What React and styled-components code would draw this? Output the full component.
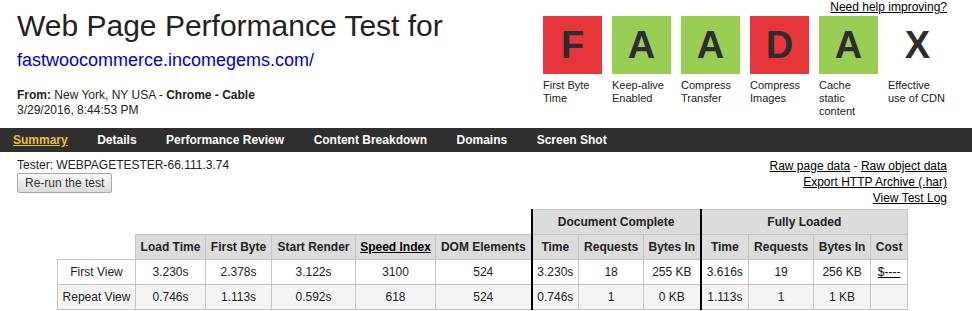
import styled, { createGlobalStyle } from "styled-components";

const GRADES = [
  { letter: "F", label: "First Byte Time", tone: "bad" },
  { letter: "A", label: "Keep-alive Enabled", tone: "good" },
  { letter: "A", label: "Compress Transfer", tone: "good" },
  { letter: "D", label: "Compress Images", tone: "bad" },
  { letter: "A", label: "Cache static content", tone: "good" },
  { letter: "X", label: "Effective use of CDN", tone: "none" },
];

const TABS = [
  "Summary",
  "Details",
  "Performance Review",
  "Content Breakdown",
  "Domains",
  "Screen Shot",
];

const COLS = [78, 70, 66, 84, 80, 96, 47, 65, 57, 48, 65, 57, 37];

const ROWS = [
  {
    name: "First View",
    cells: ["3.230s", "2.378s", "3.122s", "3100", "524"],
    doc: ["3.230s", "18", "255 KB"],
    full: ["3.616s", "19", "256 KB"],
    cost: "$----",
  },
  {
    name: "Repeat View",
    cells: ["0.746s", "1.113s", "0.592s", "618", "524"],
    doc: ["0.746s", "1", "0 KB"],
    full: ["1.113s", "1", "1 KB"],
    cost: "",
  },
];

const TONES = {
  bad: "#e5363a",
  good: "#9acd54",
  none: "transparent",
};

export default function App() {
  return (
    <>
      <GlobalStyle />
      <Header>
        <TitleBlock>
          <Title>Web Page Performance Test for</Title>
          <SiteLink href="#">fastwoocommerce.incomegems.com/</SiteLink>
          <Meta>
            <b>From:</b> New York, NY USA - <b>Chrome - Cable</b>
            <br />
            3/29/2016, 8:44:53 PM
          </Meta>
        </TitleBlock>
        <GradeBlock>
          <PlainLink href="#">Need help improving?</PlainLink>
          <GradeRow>
            {GRADES.map((g) => (
              <Grade key={g.label}>
                <GradeBox tone={g.tone}>{g.letter}</GradeBox>
                <GradeLabel>{g.label}</GradeLabel>
              </Grade>
            ))}
          </GradeRow>
        </GradeBlock>
      </Header>

      <NavBar>
        {TABS.map((tab, i) => (
          <NavItem key={tab} active={i === 0}>
            {tab}
          </NavItem>
        ))}
      </NavBar>

      <InfoRow>
        <div>
          <Line>Tester: WEBPAGETESTER-66.111.3.74</Line>
          <Button>Re-run the test</Button>
        </div>
        <LinkList>
          <div>
            <PlainLink href="#">Raw page data</PlainLink> -{" "}
            <PlainLink href="#">Raw object data</PlainLink>
          </div>
          <div>
            <PlainLink href="#">Export HTTP Archive (.har)</PlainLink>
          </div>
          <div>
            <PlainLink href="#">View Test Log</PlainLink>
          </div>
        </LinkList>
      </InfoRow>

      <Results>
        <colgroup>
          {COLS.map((w, i) => (
            <col key={i} style={{ width: w }} />
          ))}
        </colgroup>
        <tbody>
          <tr>
            <Blank colSpan={6} />
            <Head colSpan={3} split>
              Document Complete
            </Head>
            <Head colSpan={4} split>
              Fully Loaded
            </Head>
          </tr>
          <tr>
            <Blank />
            <Head>Load Time</Head>
            <Head>First Byte</Head>
            <Head>Start Render</Head>
            <Head>
              <PlainLink href="#">Speed Index</PlainLink>
            </Head>
            <Head>DOM Elements</Head>
            <Head split>Time</Head>
            <Head>Requests</Head>
            <Head>Bytes In</Head>
            <Head split>Time</Head>
            <Head>Requests</Head>
            <Head>Bytes In</Head>
            <Head>Cost</Head>
          </tr>
          {ROWS.map((row, r) => (
            <DataRow key={row.name} shaded={r % 2 === 1}>
              <Cell>{row.name}</Cell>
              {row.cells.map((c, i) => (
                <Cell key={"c" + i}>{c}</Cell>
              ))}
              {row.doc.map((c, i) => (
                <Cell key={"d" + i} split={i === 0}>
                  {c}
                </Cell>
              ))}
              {row.full.map((c, i) => (
                <Cell key={"f" + i} split={i === 0}>
                  {c}
                </Cell>
              ))}
              <Cell>{row.cost && <PlainLink href="#">{row.cost}</PlainLink>}</Cell>
            </DataRow>
          ))}
        </tbody>
      </Results>
    </>
  );
}

const GlobalStyle = createGlobalStyle`
  body {
    margin: 0;
    font-family: "Liberation Sans", Arial, sans-serif;
    font-size: 12px;
    color: #222;
    background: #fff;
  }
`;

const Header = styled.div`
  display: flex;
  justify-content: space-between;
  align-items: flex-start;
  padding-right: 25px;
`;

const TitleBlock = styled.div`
  padding: 9px 0 0 17px;
`;

const Title = styled.h1`
  margin: 0;
  font-size: 30px;
  line-height: 34px;
  font-weight: normal;
  color: #222;
`;

const SiteLink = styled.a`
  display: block;
  margin-top: 7px;
  font-size: 18px;
  line-height: 21px;
  color: #0000cc;
  text-decoration: none;
`;

const Meta = styled.div`
  margin-top: 17px;
  line-height: 15px;
`;

const GradeBlock = styled.div`
  display: flex;
  flex-direction: column;
  align-items: flex-end;
  line-height: 15px;
`;

const PlainLink = styled.a`
  color: #000;
  text-decoration: underline;
`;

const GradeRow = styled.div`
  display: flex;
  gap: 10px;
  margin-top: 1px;
`;

const Grade = styled.div`
  width: 59px;
`;

const GradeBox = styled.div`
  height: 58px;
  background: ${({ tone }) => TONES[tone]};
  color: #2d2d2d;
  font-size: 38px;
  font-weight: bold;
  line-height: 58px;
  text-align: center;
`;

const GradeLabel = styled.div`
  margin-top: 5px;
  font-size: 11px;
  line-height: 13px;
`;

const NavBar = styled.div`
  display: flex;
  gap: 29.5px;
  margin-top: 10px;
  padding-left: 13px;
  height: 24px;
  align-items: center;
  background: #2f2f2f;
`;

const NavItem = styled.a`
  font-weight: bold;
  color: ${({ active }) => (active ? "#f0c030" : "#fff")};
  text-decoration: ${({ active }) => (active ? "underline" : "none")};
`;

const InfoRow = styled.div`
  display: flex;
  justify-content: space-between;
  padding: 6px 25px 0 17px;
`;

const Line = styled.div`
  line-height: 15px;
`;

const Button = styled.button`
  height: 20px;
  padding: 0 7px;
  border: 1px solid #a8a8a8;
  border-radius: 2px;
  background: linear-gradient(#f8f8f8, #dcdcdc);
  font-family: inherit;
  font-size: 12px;
  color: #333;
`;

const LinkList = styled.div`
  text-align: right;
  line-height: 16px;
`;

const Results = styled.table`
  margin: 3px 0 0 57px;
  border-collapse: collapse;
  table-layout: fixed;
  width: 850px;
`;

const Blank = styled.td`
  border: none;
  padding: 0;
`;

const Head = styled.th`
  height: 24px;
  padding: 0 2px;
  background: #dcdcdc;
  border: 1px solid #c4c4c4;
  border-left: ${({ split }) => (split ? "2px solid #000" : "1px solid #c4c4c4")};
  font-weight: bold;
  color: #222;
  text-align: center;
  white-space: nowrap;
`;

const DataRow = styled.tr`
  background: ${({ shaded }) => (shaded ? "#f4f4f4" : "#fff")};
`;

const Cell = styled.td`
  height: 24px;
  padding: 0 2px;
  border: 1px solid #c4c4c4;
  border-left: ${({ split }) => (split ? "2px solid #000" : "1px solid #c4c4c4")};
  text-align: center;
  white-space: nowrap;
`;
